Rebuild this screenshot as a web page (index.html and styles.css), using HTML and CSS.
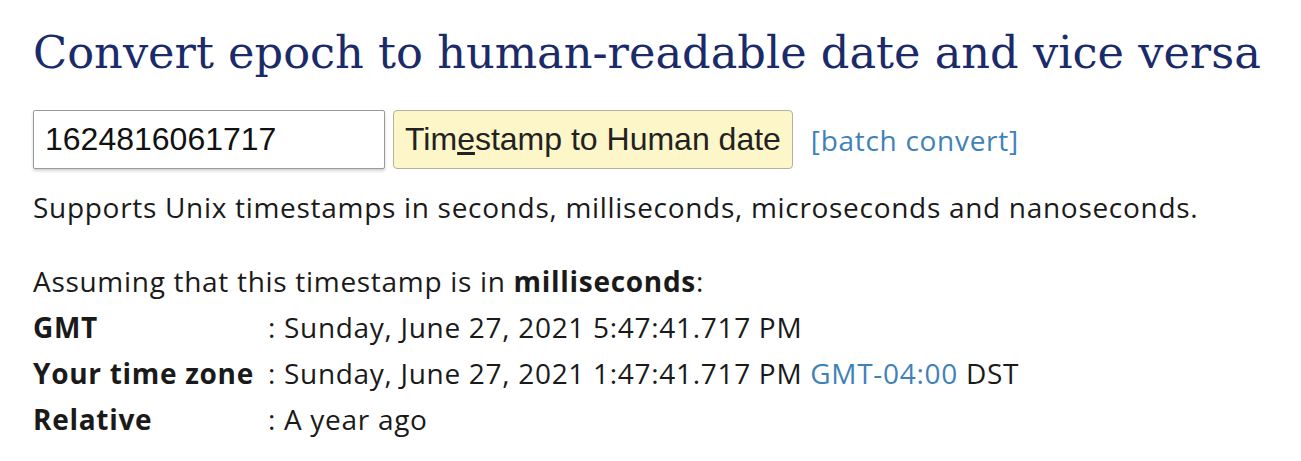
FILE: index.html
```html
<!DOCTYPE html>
<html lang="en">
<head>
<meta charset="utf-8">
<title>Epoch Converter</title>
<link rel="stylesheet" href="styles.css">
</head>
<body>
<main class="page">
  <h1 class="title">Convert epoch to human-readable date and vice versa</h1>
  <form class="conv-form">
    <input class="ts-input" type="text" value="1624816061717">
    <button class="ts-button" type="button">Tim<u>e</u>stamp to Human date</button>
    <a class="batch-link" href="#">[batch convert]</a>
  </form>
  <p class="supports">Supports Unix timestamps in seconds, milliseconds, microseconds and nanoseconds.</p>
  <div class="result">
    <p class="assume">Assuming that this timestamp is in <b>milliseconds</b>:</p>
    <div class="rows">
      <span class="label">GMT</span><span class="value">: Sunday, June 27, 2021 5:47:41.717 PM</span>
      <span class="label">Your time zone</span><span class="value">: Sunday, June 27, 2021 1:47:41.717 PM <a class="tz-link" href="#">GMT-04:00</a> DST</span>
      <span class="label">Relative</span><span class="value">: A year ago</span>
    </div>
  </div>
</main>
</body>
</html>
```
FILE: styles.css
```css
html, body {
  margin: 0;
  padding: 0;
  background: #ffffff;
}
body {
  font-family: "Open Sans", "Noto Sans", sans-serif;
  font-size: 28px;
  letter-spacing: 0.7px;
  color: #1a1a1a;
}
.page {
  padding: 0 0 0 33px;
}
.title {
  margin: 0;
  padding-top: 24px;
  font-family: "DejaVu Serif", serif;
  font-weight: normal;
  font-size: 44.7px;
  letter-spacing: 0;
  line-height: 58px;
  color: #1b2b6a;
  white-space: nowrap;
}
.conv-form {
  display: flex;
  align-items: center;
  margin-top: 28px;
  gap: 8px;
}
.ts-input {
  box-sizing: border-box;
  width: 352px;
  height: 59px;
  padding: 0 11px;
  font-family: "Liberation Sans", Arial, sans-serif;
  font-size: 32px;
  letter-spacing: 0;
  color: #111;
  border: 1px solid #9a9a9a;
  border-radius: 2px;
  box-shadow: 0 2px 3px rgba(0,0,0,0.18);
  outline: none;
}
.ts-button {
  box-sizing: border-box;
  height: 59px;
  padding: 0 11px;
  font-family: "Liberation Sans", Arial, sans-serif;
  font-size: 32px;
  letter-spacing: 0;
  color: #222;
  background: #fdf6c8;
  border: 1px solid #b5b0a0;
  border-radius: 4px;
}
.batch-link {
  margin-left: 10px;
  color: #3f82b8;
  text-decoration: none;
}
.supports {
  margin: 15px 0 0;
  line-height: 46px;
}
.result {
  margin-top: 28px;
  line-height: 46px;
}
.assume {
  margin: 0;
}
.rows {
  display: grid;
  grid-template-columns: auto 1fr;
  column-gap: 14px;
}
.label {
  font-weight: bold;
}
.tz-link {
  color: #3f82b8;
  text-decoration: none;
}
```
